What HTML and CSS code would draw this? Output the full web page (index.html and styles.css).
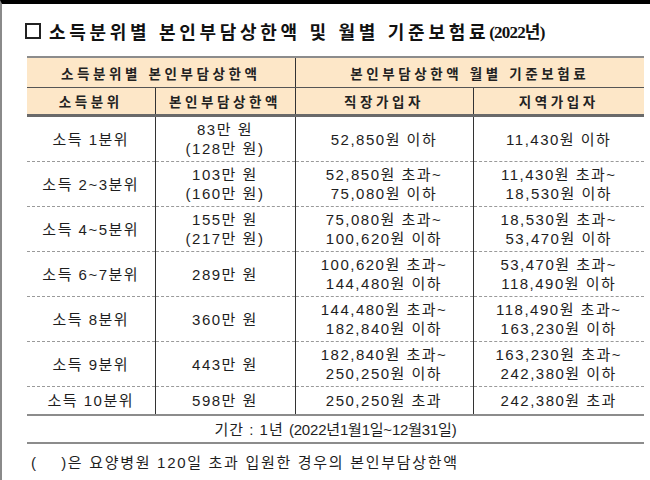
FILE: index.html
```html
<!DOCTYPE html>
<html lang="ko">
<head>
<meta charset="utf-8">
<link rel="stylesheet" href="styles.css">
</head>
<body>
<div class="page">
  <h1 class="title"><span class="box"></span><span class="ttext">소득분위별 본인부담상한액 및 월별 기준보험료</span><span class="yr">(2022년)</span></h1>
  <table class="tbl">
    <colgroup><col class="c1"><col class="c2"><col class="c3"><col class="c4"></colgroup>
    <thead>
      <tr class="hr1"><th colspan="2" class="vr">소득분위별 본인부담상한액</th><th colspan="2">본인부담상한액 월별 기준보험료</th></tr>
      <tr class="hr2"><th class="vr">소득분위</th><th class="vr">본인부담상한액</th><th class="vr">직장가입자</th><th>지역가입자</th></tr>
    </thead>
    <tbody>
      <tr><td class="vr">소득 1분위</td><td class="vr">83만 원<br>(128만 원)</td><td class="vr">52,850원 이하</td><td>11,430원 이하</td></tr>
      <tr><td class="vr">소득 2~3분위</td><td class="vr">103만 원<br>(160만 원)</td><td class="vr">52,850원 초과~<br>75,080원 이하</td><td>11,430원 초과~<br>18,530원 이하</td></tr>
      <tr><td class="vr">소득 4~5분위</td><td class="vr">155만 원<br>(217만 원)</td><td class="vr">75,080원 초과~<br>100,620원 이하</td><td>18,530원 초과~<br>53,470원 이하</td></tr>
      <tr><td class="vr">소득 6~7분위</td><td class="vr">289만 원</td><td class="vr">100,620원 초과~<br>144,480원 이하</td><td>53,470원 초과~<br>118,490원 이하</td></tr>
      <tr><td class="vr">소득 8분위</td><td class="vr">360만 원</td><td class="vr">144,480원 초과~<br>182,840원 이하</td><td>118,490원 초과~<br>163,230원 이하</td></tr>
      <tr><td class="vr">소득 9분위</td><td class="vr">443만 원</td><td class="vr">182,840원 초과~<br>250,250원 이하</td><td>163,230원 초과~<br>242,380원 이하</td></tr>
      <tr class="last"><td class="vr">소득 10분위</td><td class="vr">598만 원</td><td class="vr">250,250원 초과</td><td>242,380원 초과</td></tr>
    </tbody>
    <tfoot>
      <tr><td colspan="4">기간 : 1년 <span class="cond">(2022년1월1일~12월31일)</span></td></tr>
    </tfoot>
  </table>
  <p class="note">(&nbsp;&nbsp;&nbsp;&nbsp;)은 요양병원 120일 초과 입원한 경우의 본인부담상한액</p>
</div>
</body>
</html>
```

FILE: styles.css
```css
html, body {
  margin: 0;
  padding: 0;
  background: #fff;
}
body {
  width: 650px;
  height: 480px;
  overflow: hidden;
}
.page {
  box-sizing: border-box;
  height: 480px;
  border-top: 4px solid #000;
  border-left: 2px solid #8a8a8a;
  padding: 0 0 0 23px;
  font-family: "Liberation Sans", "Noto Sans CJK KR", sans-serif;
  color: #1e1e1e;
}
.title {
  margin: 0;
  padding-top: 17px;
  height: 36px;
  box-sizing: border-box;
  display: flex;
  align-items: center;
  font-size: 18px;
  font-weight: bold;
  font-family: "Noto Sans CJK KR", sans-serif;
  color: #111;
  letter-spacing: 3.7px;
  white-space: nowrap;
}
.box {
  width: 12px;
  height: 12px;
  border: 2px solid #222;
  margin-right: 8px;
  flex: none;
}
.yr {
  font-size: 17px;
  letter-spacing: -0.8px;
  font-family: "Liberation Serif", "Noto Sans CJK KR", serif;
}
.tbl {
  margin-top: 16px;
  margin-left: 2px;
  border-collapse: collapse;
  table-layout: fixed;
  width: 617px;
}
.c1 { width: 128px; }
.c2 { width: 140px; }
.c3 { width: 178px; }
.c4 { width: 171px; }
.tbl th {
  background: #fde7c8;
  font-family: "Noto Sans CJK KR", sans-serif;
  font-weight: bold;
  font-size: 13.5px;
  letter-spacing: 3.6px;
  color: #222;
  padding: 0;
  text-align: center;
}
.hr1 th {
  height: 29px;
  border-top: 2px solid #8c8c8c;
  border-bottom: 1px solid #555;
}
.hr2 th {
  height: 26px;
  border-bottom: 3px solid #6a6a6a;
}
.vr {
  border-right: 1px solid #333;
}
.tbl td {
  padding: 0;
  text-align: center;
  font-size: 15px;
  line-height: 19px;
  letter-spacing: 1.5px;
  height: 44px;
  border-bottom: 1px dashed #9a9a9a;
}
.tbl tbody tr.last td {
  height: 27px;
  border-bottom: 2px solid #8c8c8c;
}
.tbl tfoot td {
  height: 26px;
  font-size: 15px;
  letter-spacing: 1px;
  border-bottom: 2px solid #8c8c8c;
}
.cond {
  letter-spacing: -0.2px;
}
.note {
  margin: 9px 0 0 6px;
  font-size: 15px;
  line-height: 20px;
  letter-spacing: 1.7px;
}
```
